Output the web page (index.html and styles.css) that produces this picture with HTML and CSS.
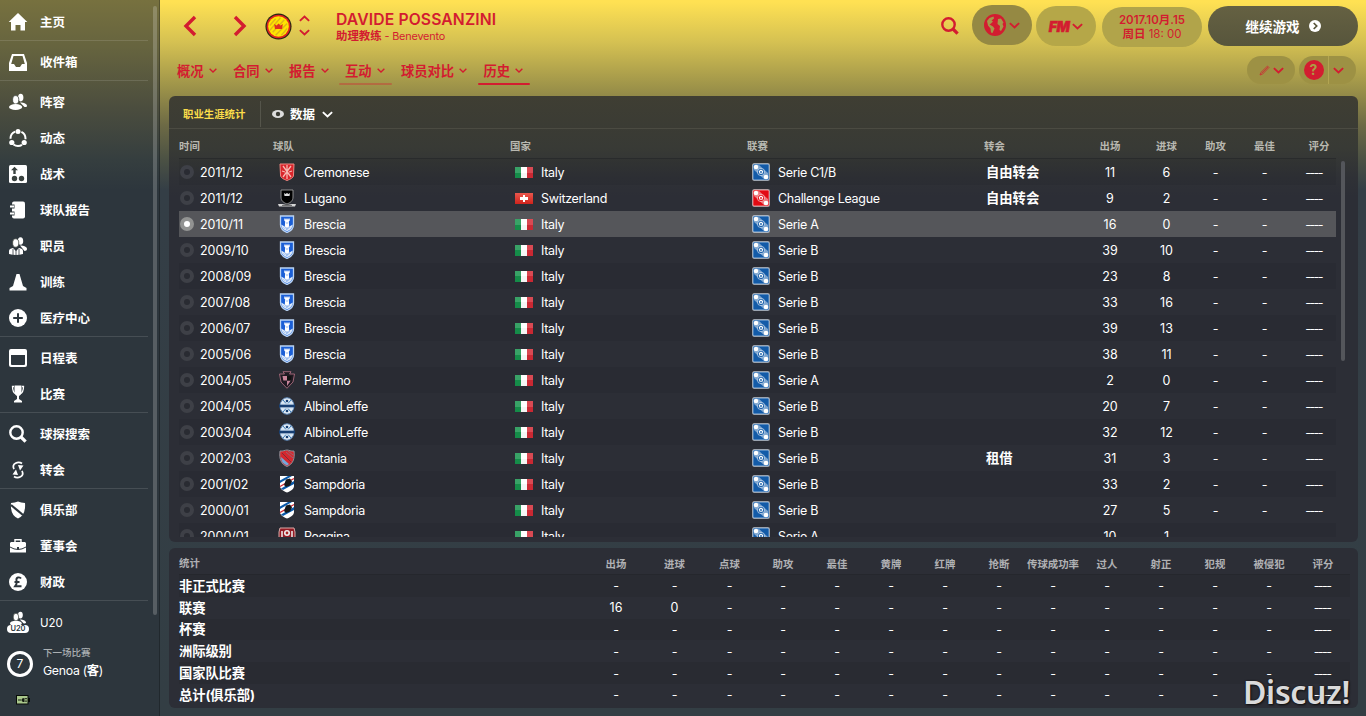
FILE: index.html
```
<!DOCTYPE html>
<html lang="zh-CN">
<head>
<meta charset="utf-8">
<title>Davide Possanzini</title>
<link rel="stylesheet" href="styles.css">
</head>
<body>
<svg class="defs" width="0" height="0">
  <symbol id="chev" viewBox="0 0 10 6"><path d="M.8.800l4.200 4 4.200-4" fill="none" stroke="currentColor" stroke-width="1.700"/></symbol>
  <symbol id="search" viewBox="0 0 18 18"><circle cx="7.5" cy="7.5" r="6.2" fill="none" stroke="currentColor" stroke-width="2.4"/><path d="M12 12l4.6 4.6" stroke="currentColor" stroke-width="3.2"/></symbol>
  <symbol id="people" viewBox="0 0 18 18"><ellipse cx="11.7" cy="4.6" rx="2.7" ry="3.8"/><path d="M11 9.5c4 0 7 1.500 7 3.500 0 .8-1 1.200-2.500 1z"/><ellipse cx="6.700" cy="6.800" rx="3.100" ry="4.200" class="cut"/><ellipse cx="6.600" cy="14" rx="6.600" ry="3" /></symbol>
  <symbol id="brescia" viewBox="0 0 16 18"><path d="M1.500 1h13v9c0 4-3 6-6.500 7.500C4.500 16 1.500 14 1.500 10z" fill="#1b5fd6" stroke="#b9d3f3" stroke-width="1.300"/><path d="M2.300 9.500L8 13l5.700-3.500c0 3.500-2.700 5.500-5.700 6.800-3-1.300-5.700-3.300-5.700-6.800z" fill="#dce9fa"/><path d="M5.300 3.500v2.300l.9.700-.4 5L8 13l2.200-1.500-.4-5 .9-.7V3.500H9.400v1h-.8v-1H7.400v1h-.8v-1z" fill="#fff"/><path d="M7 8h2M4.500 12.500l1 1m1-1l1.500 2m1-1.500l-2 2.500m3.500-3.500l-1 1.500" stroke="#79a6e8" stroke-width=".8"/></symbol>
  <symbol id="cremonese" viewBox="0 0 16 18"><path d="M1 1h14l-.5 11c0 3-3 4-6.500 5.500C4.500 16 1.500 15 1.500 12z" fill="#d9252b" stroke="#ef8a83" stroke-width="1"/><path d="M4 3l8 11M12 3L4 14M8 2v14M3 8l3 1m4 0l3-1" stroke="#f5b9b2" stroke-width="1.300"/></symbol>
  <symbol id="lugano" viewBox="0 0 18 18"><path d="M3 1h12v7c0 4-2.500 5.500-6 7-3.500-1.500-6-3-6-7z" fill="#000" stroke="#aaa" stroke-width=".8"/><path d="M6 4l1.500 1L9 4l1.500 1L12 4l-.5 3h-5z" fill="#ddd"/><path d="M0 15h4l5 1 5-1h4l-1 2.500H1z" fill="#d6d6d6"/><path d="M4 16.500h10" stroke="#555" stroke-width=".8"/></symbol>
  <symbol id="palermo" viewBox="0 0 16 18"><path d="M4 .7h8L10.500 3h5L14 11l-6 6.300L2 11 .5 3h5z" fill="#201a22" stroke="#a96b7d" stroke-width=".9"/><path d="M3.500 5H8v4.500H4.300zM8 9.500h3.700L8 15z" fill="#c9859b"/><path d="M8 5h4.500l-.8 4.500H8z" fill="#111"/></symbol>
  <symbol id="albino" viewBox="0 0 16 18"><ellipse cx="8" cy="9" rx="7" ry="8.300" fill="#dfeaf5" stroke="#5c86b6"/><path d="M4 3l3 3.500M12 3L9 6.500M4 15l3-3.500m5 3.500l-3-3.500" fill="none" stroke="#3478b5" stroke-width="1"/><circle cx="8" cy="4" r="1.300" fill="#173f73"/><circle cx="8" cy="14" r="1.300" fill="#173f73"/><path d="M0 7.500h16v3H0z" fill="#173f73"/><path d="M1 7h14M1 11h14" stroke="#bad2e9" stroke-width=".7"/></symbol>
  <symbol id="catania" viewBox="0 0 16 18"><path d="M1 2c3 .5 5-1 7-1s4 1.500 7 1c1 8-1 13-7 15.500C2 15 0 10 1 2z" fill="#d6272e" stroke="#8a9099"/><path d="M2 8l8 7-2 1.500C4 15 2 12 2 8z" fill="#73a8db"/><path d="M3 4l9 9" stroke="#7f2b37" stroke-width="1"/><path d="M7 3l7 6M9 2l5 4" stroke="#9a6470" stroke-width="1"/></symbol>
  <symbol id="samp" viewBox="0 0 16 18"><path d="M1 1h14v10c0 3-3 5-7 6.500C4 16 1 14 1 11z" fill="#fff"/><path d="M1 5.500L9 1h4L1 8z" fill="#0959aa"/><path d="M2 13.500L15 6v3L4 15z" fill="#0959aa"/><path d="M1 11.500L15 3.500" stroke="#d32830" stroke-width="1.300"/><path d="M7 4.500l4-1 2 3-2 4-4 1.500-2-2z" fill="#17191b"/></symbol>
  <symbol id="reggina" viewBox="0 0 18 18"><path d="M2 1h14l1 4v10H1V5z" fill="#941c25" stroke="#d9aaa8"/><circle cx="9" cy="6" r="3" fill="#eee"/><circle cx="9" cy="6" r="1.400" fill="#a22"/><path d="M4 4v8m10-8v8" stroke="#eee" stroke-width="1.500"/></symbol>
  <symbol id="league" viewBox="0 0 18 18"><rect x=".7" y=".7" width="16.600" height="16.600" rx="1.500" fill="currentColor" stroke="#fff" stroke-opacity=".55" stroke-width="1.400"/><path d="M2 3L7 2l9 8v6h-4L2 7z" fill="#fff" opacity=".45"/><circle cx="9" cy="9" r="3.600" fill="currentColor" stroke="#fff" stroke-opacity=".7" stroke-width=".8"/><path d="M9 6.500L11.300 8l-.8 2.700h-3L6.700 8z" fill="#fff"/><circle cx="9" cy="9" r=".9" fill="currentColor"/><circle cx="4" cy="4" r="2.300" fill="#fff"/><circle cx="14" cy="14" r="2.300" fill="#fff"/></symbol>
</svg>
<div class="app">
<aside class="side">
  <nav class="menu">
    <a class="item"><svg class="ic" viewBox="0 0 18 18"><path d="M9 0l9.300 9H16v8.500h-4.500v-5.500h-5v5.500H2V9H-.3z"/></svg><span>主页</span></a>
    <a class="item sep"><svg class="ic" viewBox="0 0 18 18"><path fill-rule="evenodd" d="M3 1h12l3 9v8H0v-8zm1.500 2L2.200 11H5l2 3h4l2-3h2.800L13.500 3z"/></svg><span>收件箱</span></a>
    <a class="item sep"><svg class="ic"><use href="#people"/></svg><span>阵容</span></a>
    <a class="item"><svg class="ic" viewBox="0 0 18 18"><circle cx="9" cy="9.500" r="7.500" fill="none" stroke="#fff" stroke-width="2" stroke-dasharray="9 6.700" stroke-dashoffset="-3.500" transform="rotate(-90 9 9.500)"/><circle cx="9" cy="2.500" r="2.500"/><circle cx="2.800" cy="13.500" r="2.600"/><circle cx="15.200" cy="13.500" r="2.600"/></svg><span>动态</span></a>
    <a class="item"><svg class="ic" viewBox="0 0 18 18"><rect width="18" height="18" rx="1.500"/><g fill="#3a423f"><path d="M5.500 1.800L9 5.300H6.700V9H4.300V5.300H2z"/><circle cx="5.500" cy="13.500" r="2.700"/><circle cx="12.500" cy="13.500" r="2.700"/></g></svg><span>战术</span></a>
    <a class="item"><svg class="ic" viewBox="0 0 18 18"><path d="M5 .5h9q2 0 2 2v13q0 2-2 2H5q-2 0-2-2v-13q0-2 2-2z"/><path d="M1 5.500h4.500M1 12.500h4.500" stroke="#2f383d" stroke-width="4"/><path d="M1 5.500h4M1 12.500h4" stroke="#fff" stroke-width="2"/></svg><span>球队报告</span></a>
    <a class="item"><svg class="ic" viewBox="0 0 18 18"><ellipse cx="11.500" cy="4" rx="2.700" ry="3.800"/><path d="M11 8.500c4 0 7 1.500 7 3.500 0 1-1 2-2.500 2z"/><ellipse cx="6.700" cy="6" rx="3.100" ry="4.200" class="cut"/><path d="M0 17v-3q0-2.500 4-3l3 3 3-3q4 .5 4 3v3q-7 2-14 0z"/><path d="M7 11v7M4 12v6m6-6v6" stroke="#2d363d" stroke-width=".8"/></svg><span>职员</span></a>
    <a class="item"><svg class="ic" viewBox="0 0 18 18"><path d="M7.500 1h3L14 13l3.500 2v2.500H.5V15L4 13z"/></svg><span>训练</span></a>
    <a class="item"><svg class="ic" viewBox="0 0 18 18"><circle cx="9" cy="9" r="9"/><path d="M9 4.200v9.600M4.200 9h9.600" stroke="#2d363d" stroke-width="2"/></svg><span>医疗中心</span></a>
    <a class="item sep"><svg class="ic" viewBox="0 0 18 18"><path fill-rule="evenodd" d="M2 0h14q2 0 2 2v14q0 2-2 2H2q-2 0-2-2V2q0-2 2-2zm0 6v9q0 1 1 1h12q1 0 1-1V6z"/></svg><span>日程表</span></a>
    <a class="item"><svg class="ic" viewBox="0 0 18 18"><path d="M5.500.5h7V6q0 4-2.500 5v3l3 2v1.500H5V16l3-2v-3q-2.500-1-2.500-5z"/><path d="M5 1.500H3.500q0 6 3.500 7.500M13 1.500h1.500q0 6-3.500 7.500" fill="none" stroke="#fff" stroke-width="1.300"/></svg><span>比赛</span></a>
    <a class="item sep"><svg class="ic"><use href="#search"/></svg><span>球探搜索</span></a>
    <a class="item"><svg class="ic" viewBox="0 0 18 18"><path d="M13 2.500Q10 .3 6.500 2.200T5 8.200M5 15.500q3 2.200 6.500.3T13 9.800" fill="none" stroke="#fff" stroke-width="1.700"/><path d="M9 4l5.500.500-3.500 5zM9 14l-5.500-.5L7 8.500z"/></svg><span>转会</span></a>
    <a class="item sep"><svg class="ic" viewBox="0 0 18 18"><path d="M2 2q4-.5 7-1.500Q12 1.500 16 2q1 12-7 15.500Q1 14 2 2z"/><path d="M2 4l12 10" stroke="#2d363d" stroke-width="2.200"/></svg><span>俱乐部</span></a>
    <a class="item"><svg class="ic" viewBox="0 0 18 18"><path d="M6 5V2.700h6V5" fill="none" stroke="#fff" stroke-width="1.400"/><path d="M2 5h14l1 1v9.500H1V6z"/><path d="M1 10q8 5 16 0" fill="none" stroke="#2d363d"/><path d="M8 10h2v2H8z" fill="#2d363d"/></svg><span>董事会</span></a>
    <a class="item"><svg class="ic" viewBox="0 0 18 18"><circle cx="9" cy="9" r="9"/><path d="M12 5.500Q11 4 9 4.500T7.500 7.500V11L6 13.300h6.500M5.500 9h5" fill="none" stroke="#2d363d" stroke-width="1.900"/></svg><span>财政</span></a>
    <a class="item sep light"><div class="u20"><svg class="ic"><use href="#people"/></svg><b>U20</b></div>U20</a>
  </nav>
  <div class="next"><span class="count">7</span><div><small>下一场比赛</small><p>Genoa (<b>客</b>)</p></div></div>
  <svg class="battery" viewBox="0 0 14 10"><rect x=".5" y=".5" width="11.500" height="8.500" fill="#a9c78b" stroke="#080b08"/><path d="M12 3h2v4h-2z" fill="#080b08"/><path d="M2 5h3m4-1.300h2m-2 2.400h2" stroke="#151b12"/><path d="M8.500 3v4Q5.500 7 5.500 5t3-2z" fill="#151b12"/></svg>
  <i class="sidebar-scroll"></i>
</aside>
<main class="main">
  <header class="top">
    <div class="history"><svg width="14" height="22" viewBox="0 0 14 22"><path d="M12 2L3 11l9 9" fill="none" stroke="currentColor" stroke-width="3.400"/></svg><svg width="14" height="22" viewBox="0 0 14 22"><path d="M2 2l9 9-9 9" fill="none" stroke="currentColor" stroke-width="3.400"/></svg></div>
    <svg class="club" viewBox="0 0 28 28"><circle cx="14" cy="14" r="13.500" fill="#252514"/><circle cx="14" cy="14" r="12.300" fill="#df2420"/><circle cx="14" cy="14" r="10.700" fill="#ffe500"/><path d="M5 13l6-7M5 18L16 5M8 20L20 7M11 23l12-12M17 23l6-7" stroke="#e0b51a" stroke-width="1.500"/><path d="M9.500 11.500l2.500 1.500 2-2 2 2 2.500-1.500-.8 5h-7.400z" fill="#e0301e"/></svg>
    <div class="updown"><svg class="chev flip"><use href="#chev"/></svg><svg class="chev"><use href="#chev"/></svg></div>
    <div class="title"><h1>DAVIDE POSSANZINI</h1><p><b>助理教练</b> - Benevento</p></div>
    <svg class="find"><use href="#search"/></svg>
    <div class="pill globe"><svg width="22" height="22" viewBox="0 0 22 22"><circle cx="11" cy="11" r="11" fill="currentColor"/><path d="M3 7l2.500-3 4-1.500.5 2-2.500 2 1.500 1-2 2-1.500 1 3.500 2 1.500 2-2 4.500-1.500-.5-.5-4-2.500-3zM14 5l3-.5 2.500 4-1 1.500 1 2.500-2.500 4.500-1.500-1 .5-4-2.500-2z" fill="#a59649"/></svg><svg class="chev"><use href="#chev"/></svg></div>
    <div class="pill fm"><b>FM</b><svg class="chev"><use href="#chev"/></svg></div>
    <div class="pill date"><b>2017.10月.15</b><span><b>周日</b> 18: 00</span></div>
    <div class="pill go">继续游戏<svg width="12" height="12" viewBox="0 0 12 12"><circle cx="6" cy="6" r="6" fill="#fff"/><path d="M4.700 3l3 3-3 3" fill="none" stroke="#57543a" stroke-width="1.700"/></svg></div>
  </header>
  <div class="subnav">
    <nav class="tabs"><a>概况<svg><use href="#chev"/></svg></a><a>合同<svg><use href="#chev"/></svg></a><a>报告<svg><use href="#chev"/></svg></a><a class="soft">互动<svg><use href="#chev"/></svg></a><a>球员对比<svg><use href="#chev"/></svg></a><a class="on">历史<svg><use href="#chev"/></svg></a></nav>
    <div class="tool edit"><svg width="11" height="11" viewBox="0 0 11 11"><path d="M1 10l.8-2.500L8.500 1 10 2.500 3.500 9.200zM2.500 8.500L9 2" fill="none" stroke="currentColor" stroke-width=".7"/></svg><svg class="chev"><use href="#chev"/></svg></div>
    <div class="tool help"><b>?</b><i></i><svg class="chev"><use href="#chev"/></svg></div>
  </div>
  <section class="panel career">
    <div class="bar"><span class="name">职业生涯统计</span><svg class="eye" viewBox="0 0 12 8"><ellipse cx="6" cy="4" rx="6" ry="4" fill="#ddd"/><circle cx="6" cy="4" r="2.200" fill="#3a3a33"/></svg><b>数据</b><svg class="chev"><use href="#chev"/></svg></div>
    <div class="row head"><span>时间</span><span>球队</span><span>国家</span><span>联赛</span><span>转会</span><span>出场</span><span>进球</span><span>助攻</span><span>最佳</span><span>评分</span></div>
    <div class="list">
      <div class="row"><span><i class="dot"></i>2011/12</span><span><svg><use href="#cremonese"/></svg>Cremonese</span><span><i class="flag it"></i>Italy</span><span><svg><use href="#league"/></svg>Serie C1/B</span><b>自由转会</b><span>11</span><span>6</span><span>-</span><span>-</span><span>----</span></div>
      <div class="row"><span><i class="dot"></i>2011/12</span><span><svg><use href="#lugano"/></svg>Lugano</span><span><i class="flag ch"></i>Switzerland</span><span><svg class="red"><use href="#league"/></svg>Challenge League</span><b>自由转会</b><span>9</span><span>2</span><span>-</span><span>-</span><span>----</span></div>
      <div class="row sel"><span><i class="dot"></i>2010/11</span><span><svg><use href="#brescia"/></svg>Brescia</span><span><i class="flag it"></i>Italy</span><span><svg><use href="#league"/></svg>Serie A</span><b></b><span>16</span><span>0</span><span>-</span><span>-</span><span>----</span></div>
      <div class="row"><span><i class="dot"></i>2009/10</span><span><svg><use href="#brescia"/></svg>Brescia</span><span><i class="flag it"></i>Italy</span><span><svg><use href="#league"/></svg>Serie B</span><b></b><span>39</span><span>10</span><span>-</span><span>-</span><span>----</span></div>
      <div class="row"><span><i class="dot"></i>2008/09</span><span><svg><use href="#brescia"/></svg>Brescia</span><span><i class="flag it"></i>Italy</span><span><svg><use href="#league"/></svg>Serie B</span><b></b><span>23</span><span>8</span><span>-</span><span>-</span><span>----</span></div>
      <div class="row"><span><i class="dot"></i>2007/08</span><span><svg><use href="#brescia"/></svg>Brescia</span><span><i class="flag it"></i>Italy</span><span><svg><use href="#league"/></svg>Serie B</span><b></b><span>33</span><span>16</span><span>-</span><span>-</span><span>----</span></div>
      <div class="row"><span><i class="dot"></i>2006/07</span><span><svg><use href="#brescia"/></svg>Brescia</span><span><i class="flag it"></i>Italy</span><span><svg><use href="#league"/></svg>Serie B</span><b></b><span>39</span><span>13</span><span>-</span><span>-</span><span>----</span></div>
      <div class="row"><span><i class="dot"></i>2005/06</span><span><svg><use href="#brescia"/></svg>Brescia</span><span><i class="flag it"></i>Italy</span><span><svg><use href="#league"/></svg>Serie B</span><b></b><span>38</span><span>11</span><span>-</span><span>-</span><span>----</span></div>
      <div class="row"><span><i class="dot"></i>2004/05</span><span><svg><use href="#palermo"/></svg>Palermo</span><span><i class="flag it"></i>Italy</span><span><svg><use href="#league"/></svg>Serie A</span><b></b><span>2</span><span>0</span><span>-</span><span>-</span><span>----</span></div>
      <div class="row"><span><i class="dot"></i>2004/05</span><span><svg><use href="#albino"/></svg>AlbinoLeffe</span><span><i class="flag it"></i>Italy</span><span><svg><use href="#league"/></svg>Serie B</span><b></b><span>20</span><span>7</span><span>-</span><span>-</span><span>----</span></div>
      <div class="row"><span><i class="dot"></i>2003/04</span><span><svg><use href="#albino"/></svg>AlbinoLeffe</span><span><i class="flag it"></i>Italy</span><span><svg><use href="#league"/></svg>Serie B</span><b></b><span>32</span><span>12</span><span>-</span><span>-</span><span>----</span></div>
      <div class="row"><span><i class="dot"></i>2002/03</span><span><svg><use href="#catania"/></svg>Catania</span><span><i class="flag it"></i>Italy</span><span><svg><use href="#league"/></svg>Serie B</span><b>租借</b><span>31</span><span>3</span><span>-</span><span>-</span><span>----</span></div>
      <div class="row"><span><i class="dot"></i>2001/02</span><span><svg><use href="#samp"/></svg>Sampdoria</span><span><i class="flag it"></i>Italy</span><span><svg><use href="#league"/></svg>Serie B</span><b></b><span>33</span><span>2</span><span>-</span><span>-</span><span>----</span></div>
      <div class="row"><span><i class="dot"></i>2000/01</span><span><svg><use href="#samp"/></svg>Sampdoria</span><span><i class="flag it"></i>Italy</span><span><svg><use href="#league"/></svg>Serie B</span><b></b><span>27</span><span>5</span><span>-</span><span>-</span><span>----</span></div>
      <div class="row"><span><i class="dot"></i>2000/01</span><span><svg><use href="#reggina"/></svg>Reggina</span><span><i class="flag it"></i>Italy</span><span><svg><use href="#league"/></svg>Serie A</span><b></b><span>10</span><span>1</span><span></span><span></span><span></span></div>
    </div>
    <i class="list-scroll"></i>
  </section>
  <section class="panel stats">
    <div class="srow shead"><b>统计</b><span>出场</span><span>进球</span><span>点球</span><span>助攻</span><span>最佳</span><span>黄牌</span><span>红牌</span><span>抢断</span><span>传球成功率</span><span>过人</span><span>射正</span><span>犯规</span><span>被侵犯</span><span>评分</span></div>
    <div class="srow"><b>非正式比赛</b><span>-</span><span>-</span><span>-</span><span>-</span><span>-</span><span>-</span><span>-</span><span>-</span><span>-</span><span>-</span><span>-</span><span>-</span><span>-</span><span>----</span></div>
    <div class="srow"><b>联赛</b><span>16</span><span>0</span><span>-</span><span>-</span><span>-</span><span>-</span><span>-</span><span>-</span><span>-</span><span>-</span><span>-</span><span>-</span><span>-</span><span>----</span></div>
    <div class="srow"><b>杯赛</b><span>-</span><span>-</span><span>-</span><span>-</span><span>-</span><span>-</span><span>-</span><span>-</span><span>-</span><span>-</span><span>-</span><span>-</span><span>-</span><span>----</span></div>
    <div class="srow"><b>洲际级别</b><span>-</span><span>-</span><span>-</span><span>-</span><span>-</span><span>-</span><span>-</span><span>-</span><span>-</span><span>-</span><span>-</span><span>-</span><span>-</span><span>----</span></div>
    <div class="srow"><b>国家队比赛</b><span>-</span><span>-</span><span>-</span><span>-</span><span>-</span><span>-</span><span>-</span><span>-</span><span>-</span><span>-</span><span>-</span><span>-</span><span>-</span><span>----</span></div>
    <div class="srow"><b>总计(俱乐部)</b><span>-</span><span>-</span><span>-</span><span>-</span><span>-</span><span>-</span><span>-</span><span>-</span><span>-</span><span>-</span><span>-</span><span>-</span><span>-</span><span>----</span></div>
  </section>
</main>
<div class="watermark">Discuz!</div>
</div>
</body>
</html>
```
FILE: styles.css
```
* { box-sizing: border-box; }
body, h1, p { margin: 0; }
body {
  font-family: Inter, "Noto Sans CJK SC", sans-serif;
  font-size: 12.5px;
  color: #fff;
  overflow: hidden;
}
.defs { display: none; }
svg { display: block; flex: none; }
i { font-style: normal; }
.app {
  position: relative;
  display: flex;
  width: 1366px;
  height: 716px;
  background: linear-gradient(#ffe153 0, #ffe153 2px, #d5c152 42px, #9c9249 88px, #6d6a45 125px, #4b5144 160px, #343e46 190px, #333e44 716px);
}

/* Sidebar */
.side {
  position: relative;
  width: 160px;
  height: 716px;
  padding-top: 4px;
  border-right: 1px solid rgba(0, 0, 0, .25);
  background: linear-gradient(#77713f 0, #65633f 50px, #4b4d3e 108px, #353e3f 160px, #2d363d 190px, #2d363d);
}
.item {
  display: flex;
  align-items: center;
  gap: 13px;
  height: 36px;
  padding-left: 9px;
  font-size: 12.5px;
  font-weight: 700;
}
.item > span { padding-bottom: 2px; }
.item.sep { height: 40px; margin-right: 11px; border-top: 1px solid rgba(255, 255, 255, .12); padding-top: 3px; }
.item.light { padding-top: 5px; font-size: 11.500px; font-weight: 400; }
.ic { width: 18px; height: 18px; fill: #fff; color: #fff; overflow: visible; }
.cut { stroke: #3f4540; stroke-width: .8; }
.u20 { width: 18px; height: 24px; }
.u20 .ic { height: 16px; }
.u20 b {
  display: block;
  width: 22px;
  height: 8px;
  margin: -2px 0 0 -2px;
  border-radius: 5px;
  background: #fff;
  color: #2d363d;
  font-size: 7.500px;
  font-weight: 600;
  line-height: 8px;
  text-align: center;
}
.next { display: flex; gap: 10px; padding: 5px 0 0 7px; }
.count {
  width: 26px;
  height: 26px;
  margin-top: 6px;
  border: 3px solid #fff;
  border-radius: 50%;
  font-size: 12px;
  line-height: 20px;
  text-align: center;
}
.next small { display: block; height: 16px; color: #abb0b3; font-size: 9.500px; font-weight: 500; line-height: 15px; }
.next p { font-size: 12.300px; line-height: 20px; letter-spacing: -.3px; }
.battery { width: 14px; height: 10px; margin: 14px 0 0 16px; }
.sidebar-scroll { position: absolute; left: 153px; top: 6px; width: 4px; height: 609px; border-radius: 2px; background: rgba(255, 255, 255, .2); }

/* Header */
.main { width: 1206px; color: #d31c30; }
.top { display: flex; height: 50px; padding-left: 23px; }
.history { display: flex; gap: 36px; width: 82px; padding-top: 15px; }
.club { width: 27px; height: 27px; margin: 13px 1px 0 0; }
.updown { display: flex; flex-direction: column; gap: 7px; margin: 15px 0 0 6px; }
.chev { width: 11px; height: 7px; }
.flip { transform: scaleY(-1); }
.title { width: 603px; margin-left: 26px; padding-top: 10px; }
.title h1 { font-size: 15.700px; font-weight: 600; line-height: 20px; letter-spacing: .13px; white-space: nowrap; }
.title p { font-size: 10.800px; line-height: 13px; letter-spacing: -.15px; }
.title p b { font-size: 11.400px; letter-spacing: 0; }
.find { width: 18px; height: 18px; margin: 17px 13px 0 2px; }
.pill { display: flex; align-items: center; justify-content: center; gap: 3px; width: 60px; height: 40px; margin-top: 6px; border-radius: 20px; }
.globe { margin-top: 5px; margin-right: 4px; background: #958943; }
.fm { margin-right: 6px; background: #b5a748; }
.fm b { font-size: 14px; font-weight: 900; font-style: italic; letter-spacing: -.5px; -webkit-text-stroke: .5px; }
.date { width: 100px; margin-top: 7px; margin-right: 6px; flex-direction: column; gap: 0; background: #b1a44a; font-size: 11.500px; line-height: 14px; }
.date > b { font-weight: 600; }
.go { width: 150px; gap: 9px; background: linear-gradient(#656142, #57553c); color: #fff; font-size: 13.500px; font-weight: 700; }

.subnav { display: flex; height: 46px; padding: 6px 10px 0 17px; }
.tabs { display: flex; gap: 16.400px; width: 1070px; font-size: 13.300px; font-weight: 600; }
.tabs a { position: relative; display: flex; align-items: center; gap: 5px; height: 29px; padding-bottom: 1px; }
.tabs svg { width: 8px; height: 5px; margin-top: 1px; }
.soft::after, .on::after { content: ""; position: absolute; left: -6px; right: -7px; bottom: 0; height: 2px; border-radius: 1px; background: #d31c30; }
.soft::after { opacity: .35; }
.tool { display: flex; align-items: center; justify-content: center; height: 28px; border-radius: 14px; background: #9d9144; }
.edit { width: 48px; gap: 3px; margin-right: 4px; }
.help { width: 57px; gap: 4px; padding-right: 8px; }
.help b { width: 20px; height: 20px; border-radius: 50%; background: #d31c30; color: #ac9d45; font-size: 14px; line-height: 20px; text-align: center; }
.help i { width: 1px; height: 28px; background: #b3a552; }

/* Panels */
.panel { position: relative; width: 1189px; margin-left: 9px; border-radius: 6px; color: #fff; background: #2c2e36; }
.career { height: 446px; background: linear-gradient(#3f3e33 0, #383a35 52px, #2f3136 82px, #2c2e36 100px); }
.bar { display: flex; align-items: center; height: 33px; padding-top: 4px; border-bottom: 1px solid #4b4b42; font-size: 12.500px; }
.bar b { padding-bottom: 1px; }
.name { width: 92px; height: 26px; padding-left: 14px; border-right: 1px solid #55554b; color: #fbdc4a; font-size: 10.400px; font-weight: 600; line-height: 28px; }
.eye { width: 12px; height: 8px; margin: 0 6px 0 11px; }
.bar .chev { margin-left: 7px; }
.row { display: grid; grid-template-columns: 94px 237px 237px 237px 98px 56px 57px 41px 57px 43px; align-items: center; width: 1157px; height: 26px; }
.row:nth-child(odd) { background: rgba(0, 0, 0, .05); }
.row.head { height: 30px; padding-top: 3px; margin-left: 10px; background: none; border-bottom: 1px solid #292b2c; color: #b8b8b0; font-size: 10.400px; font-weight: 600; }
.row.head span:last-child { padding-left: 9px; }
.row > span { display: flex; align-items: center; }
.list .row > span:nth-child(n+2):nth-child(-n+4) { letter-spacing: -.3px; }
.row > span:nth-child(n+6) { justify-content: center; }
.list .row > span:last-child, .srow:not(.shead) span:last-child { padding-right: 2px; letter-spacing: -1.600px; }
.row > b { padding: 0 0 2px 2px; font-size: 13.300px; }
.row svg { width: 18px; height: 18px; margin: 0 8px 0 5px; color: #135ba8; }
.row svg.red { color: #e20a13; }
.list { height: 378px; margin-left: 10px; overflow: hidden; }
.list .row.sel { background: #55565a; }
.dot { width: 14px; height: 14px; margin: 0 6px 0 1px; border: 4px solid #3e4047; border-radius: 50%; background: #292b32; }
.sel .dot { border-color: #929392; background: #fff; }
.flag { width: 18px; height: 11px; margin: 0 8px 0 5px; }
.it { background: linear-gradient(rgba(255, 255, 255, .15) 50%, rgba(0, 0, 0, .04) 50%), linear-gradient(90deg, #16924c 6px, #fff 6px 12px, #d22a35 12px); }
.ch { background: linear-gradient(#fff, #fff) center / 8px 3px no-repeat, linear-gradient(#fff, #fff) center / 2px 7px no-repeat, linear-gradient(#e9574d, #cf231c); }
.list-scroll { position: absolute; left: 1172px; top: 65px; width: 4px; height: 200px; border-radius: 2px; background: #54565b; }

.stats { height: 160px; margin-top: 6px; padding: 5px 8px 0 10px; }
.srow { display: grid; grid-template-columns: 407px 60px 57px 53px repeat(11, 54px); align-items: center; height: 21.800px; text-align: center; }
.srow b { font-size: 13.300px; line-height: 18px; text-align: left; letter-spacing: -.1px; }
.srow:nth-child(even) { background: rgba(0, 0, 0, .06); }
.srow.shead { height: 22px; border-bottom: 1px solid #25272d; color: #b0b1b4; font-size: 10.400px; font-weight: 600; white-space: nowrap; }
.srow.shead b { padding-top: 1px; font-size: 10.400px; font-weight: 600; letter-spacing: 0; }

.watermark {
  position: absolute;
  right: 16px;
  bottom: 2px;
  color: #dadada;
  font: 600 32px/44px "Noto Sans", "Open Sans", sans-serif;
  letter-spacing: -.3px;
  text-shadow: 0 0 2px #111, 1px 1px 2px #111;
}
```
